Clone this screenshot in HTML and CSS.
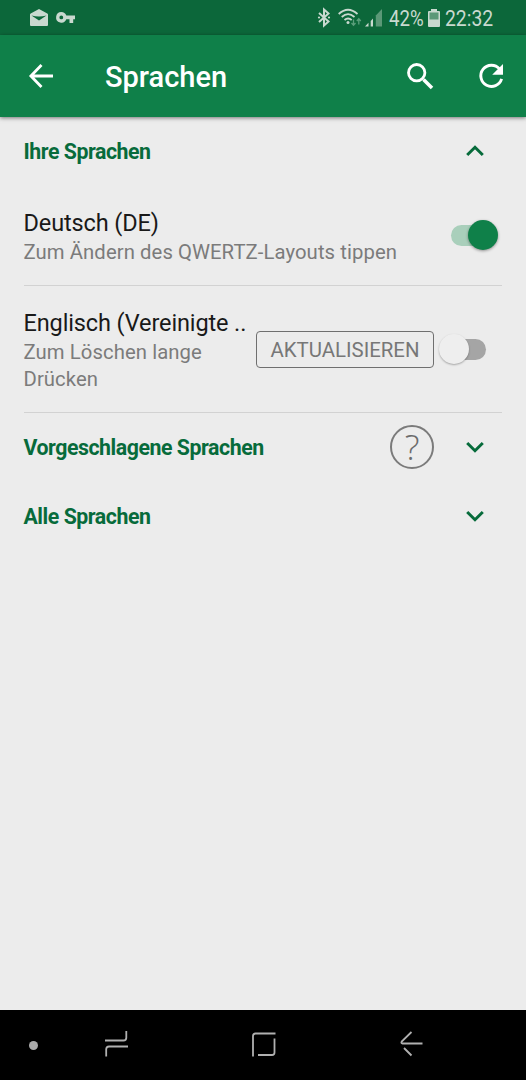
FILE: index.html
```html
<!DOCTYPE html>
<html lang="de">
<head>
<meta charset="utf-8">
<title>Sprachen</title>
<link rel="stylesheet" href="styles.css">
</head>
<body>
<div class="screen">
  <div class="status">
    <svg class="ic-mail" width="18" height="18" viewBox="0 0 18 18"><path fill="currentColor" fill-rule="evenodd" d="M9 0 17.3 4.400Q18 4.800 18 5.500V16Q18 17 17 17H1Q0 17 0 16V5.500Q0 4.800.7 4.400ZM1.500 6.500 9 11.500 16.500 6.500Q9 8.500 1.500 6.500Z"/></svg>
    <svg class="ic-key" width="19" height="11" viewBox="0 0 19 11"><path fill="currentColor" fill-rule="evenodd" d="M5.300 0A5.300 5.300 0 0 1 10.300 3.600H19V7.300H17.200V11H13.500V7.300H10.300A5.300 5.300 0 1 1 5.300 0ZM5.300 3.500A1.900 1.900 0 1 0 5.300 7.300 1.900 1.900 0 1 0 5.300 3.500Z"/></svg>
    <svg class="ic-bt" width="12" height="19" viewBox="0 0 12 19"><path d="M1 5 10.500 13.500 6 17.500V1.500L10.500 5.500 1 14" fill="none" stroke="currentColor" stroke-width="2"/><circle cx="1" cy="9.500" r="1.100" fill="currentColor"/><circle cx="11" cy="9.500" r="1.100" fill="currentColor"/></svg>
    <svg class="ic-wifi" width="24" height="19" viewBox="0 0 24 19"><g fill="none" stroke="currentColor" stroke-width="1.800"><path d="M.7 6Q10 -2.500 19.500 6"/><path d="M3.700 9Q10 3.300 16.500 9"/><path d="M6.500 12Q10 9 13.700 12"/></g><circle cx="10" cy="14.500" r="1.500" fill="currentColor"/><path d="M15.500 11.500V17M13.500 15 15.500 17.300 17.500 15M20.800 16.500V11M18.800 13 20.800 10.700 22.800 13" fill="none" stroke="#5b9e7b" stroke-width="1.300"/></svg>
    <svg class="ic-signal" width="18" height="18" viewBox="0 0 18 18"><path d="M3.500 13.800V17.500H0Z" fill="currentColor"/><path d="M8 9.500V17.500H5.700V12Z" fill="currentColor"/><path d="M17 0V17.500H10.800V6.500Z" fill="#5b9877"/></svg>
    <span class="st-text pct">42%</span>
    <svg class="ic-bat" width="12" height="18" viewBox="0 0 12 18"><path d="M3 0H9V2H11Q12 2 12 3V17Q12 18 11 18H1Q0 18 0 17V3Q0 2 1 2H3Z" fill="currentColor"/><path d="M1.500 3.500H10.500V10.500H1.500Z" fill="#5b9877"/></svg>
    <span class="st-text clock">22:32</span>
  </div>

  <header class="bar">
    <svg class="ic-back" width="24" height="24" viewBox="0 0 24 24"><path d="M24 12H2M12.500 1 1.900 12 12.500 23" fill="none" stroke="currentColor" stroke-width="2.800"/></svg>
    <h1 class="title">Sprachen</h1>
    <svg class="ic-search" width="27" height="27" viewBox="0 0 27 27" fill="none" stroke="currentColor"><circle cx="9.700" cy="9.700" r="8.200" stroke-width="2.800"/><path d="M16.500 16.500 25 25" stroke-width="3.500"/></svg>
    <svg class="ic-refresh" width="25" height="25" viewBox="0 0 25 25"><path d="M20.500 4.900A10.600 10.600 0 1 0 22.600 14.800" fill="none" stroke="currentColor" stroke-width="2.900"/><path d="M24 0V10.800H13.200Z" fill="currentColor"/></svg>
  </header>

  <main class="list">
    <section class="group first">
      <h2 class="group-name own">Ihre Sprachen</h2>
      <svg class="chev" width="18" height="12" viewBox="0 0 18 12"><path d="M1.200 10 9 2.300 16.800 10"/></svg>
    </section>

    <div class="row german">
      <div class="labels">
        <div class="name">Deutsch (DE)</div>
        <div class="hint">Zum Ändern des QWERTZ-Layouts tippen</div>
      </div>
      <div class="switch on"><span class="knob"></span></div>
    </div>

    <div class="row english">
      <div class="labels">
        <div class="name">Englisch (Vereinigte ..</div>
        <div class="hint">Zum Löschen lange<br>Drücken</div>
      </div>
      <button class="update"><span>AKTUALISIEREN</span></button>
      <div class="switch off"><span class="knob"></span></div>
    </div>

    <section class="group">
      <h2 class="group-name suggested">Vorgeschlagene Sprachen</h2>
      <span class="help"><span>?</span></span>
      <svg class="chev" width="18" height="12" viewBox="0 0 18 12"><path d="M1.200 2 9 9.700 16.800 2"/></svg>
    </section>
    <section class="group">
      <h2 class="group-name all">Alle Sprachen</h2>
      <svg class="chev" width="18" height="12" viewBox="0 0 18 12"><path d="M1.200 2 9 9.700 16.800 2"/></svg>
    </section>
  </main>

  <nav class="nav">
    <span class="dot"></span>
    <svg class="nav-recent" width="23" height="26" viewBox="0 0 23 26"><path d="M0 9.500H18.500Q21.300 9.500 21.300 6.700V0M23 15.500H4Q1.200 15.500 1.200 18.300V25.500"/></svg>
    <svg class="nav-home" width="24" height="25" viewBox="0 0 24 25"><path d="M1 24.500V4Q1 1.500 3.500 1.500H23.500M22.500 6.500V20.500Q22.500 23 20 23H6"/></svg>
    <svg class="nav-back" width="23" height="25" viewBox="0 0 23 25"><path d="M11.500 1 1.700 10.600Q.8 12.500 2.500 12.500H22.500M4 17 11.500 24.500"/></svg>
  </nav>
</div>
</body>
</html>
```

FILE: styles.css
```css
* { box-sizing: border-box; }
body { margin: 0; font-family: Roboto, "Liberation Sans", sans-serif; }
h1, h2 { margin: 0; }
svg { display: block; flex: none; overflow: visible; }

.screen { width: 526px; height: 1080px; display: flex; flex-direction: column; background: #ececec; overflow: hidden; }

.status { height: 35px; flex: none; display: flex; align-items: center; padding-left: 30px; background: #0c673a; color: #c9d9cf; white-space: nowrap; }
.ic-key { margin-left: 8px; }
.ic-bt { margin-left: 243px; }
.ic-wifi { margin-left: 8px; }
.ic-signal { margin-left: 3px; }
.st-text { flex: none; font-size: 22.500px; line-height: 35px; transform-origin: left center; }
.pct { width: 35px; margin-left: 6px; transform: translateY(1px) scaleX(.83); }
.ic-bat { margin-left: 4px; }
.clock { width: 50px; margin-left: 5px; transform: translateY(1px) scaleX(.86); }

.bar { height: 82px; flex: none; display: flex; align-items: center; padding-left: 29px; background: #0f8049; color: #fff; box-shadow: 0 1px 4px rgba(0, 0, 0, .5); z-index: 1; }
.title { flex: 1; padding: 2px 0 0 52px; font-size: 29px; line-height: 36px; font-weight: 500; white-space: nowrap; }
.ic-refresh { margin: 0 22px 0 45px; }

.list { flex: 1; padding: 0 24px 0 23.500px; }
.group { height: 69px; display: flex; align-items: center; color: #076b3b; }
.group.first { height: 70px; }
.group-name { flex: 1; font-size: 21.300px; line-height: 28px; font-weight: 700; letter-spacing: -.45px; white-space: nowrap; }
.chev { margin: 0 18px 2px 0; fill: none; stroke: #076b3b; stroke-width: 3; }

.row { display: flex; align-items: center; border-bottom: 1px solid #d2d2d2; }
.german { height: 99px; }
.english { height: 127px; }
.english .labels { padding-top: 2px; }
.labels { flex: 1; min-width: 0; white-space: nowrap; }
.name { font-size: 23.500px; line-height: 32px; letter-spacing: -.12px; color: #191919; }
.hint { font-size: 20.300px; line-height: 27px; letter-spacing: .08px; color: #7b7b7b; }

.switch { position: relative; flex: none; width: 35px; height: 21px; border-radius: 11px; }
.switch .knob { position: absolute; top: -5px; width: 30px; height: 30px; border-radius: 50%; box-shadow: 0 1px 3px rgba(0, 0, 0, .4); }
.switch.on { margin: 0 16px 1px 0; background: #a9cfbb; }
.switch.on .knob { left: 17px; background: #0f8049; }
.switch.off { margin: 0 16px 0 17px; background: #a5a5a5; }
.switch.off .knob { left: -12px; background: #eee; box-shadow: 0 1px 2px rgba(0, 0, 0, .3); }

.update { flex: none; width: 178px; height: 37px; padding: 2px 0 0; border: 1.500px solid #6f6f6f; border-radius: 4px; background: none; font: 20.400px/33px Roboto, sans-serif; color: #777; }

.help { flex: none; width: 44px; height: 44px; margin: 0 32px 2px 0; display: flex; align-items: center; justify-content: center; border: 2px solid #7b7b7b; border-radius: 50%; font: 300 35px/40px "Open Sans", sans-serif; color: #6b6b6b; }

.nav { height: 70px; flex: none; display: flex; align-items: center; padding-left: 29px; background: #000; }
.nav svg { fill: none; stroke: #b0b0b0; stroke-width: 1.800; }
.dot { width: 9px; height: 9px; border-radius: 50%; background: #aaa; }
.nav .nav-recent { margin: 0 0 2px 67px; }
.nav .nav-home { margin: 0 0 2px 124px; }
.nav .nav-back { margin: 0 0 3px 124px; }
```
